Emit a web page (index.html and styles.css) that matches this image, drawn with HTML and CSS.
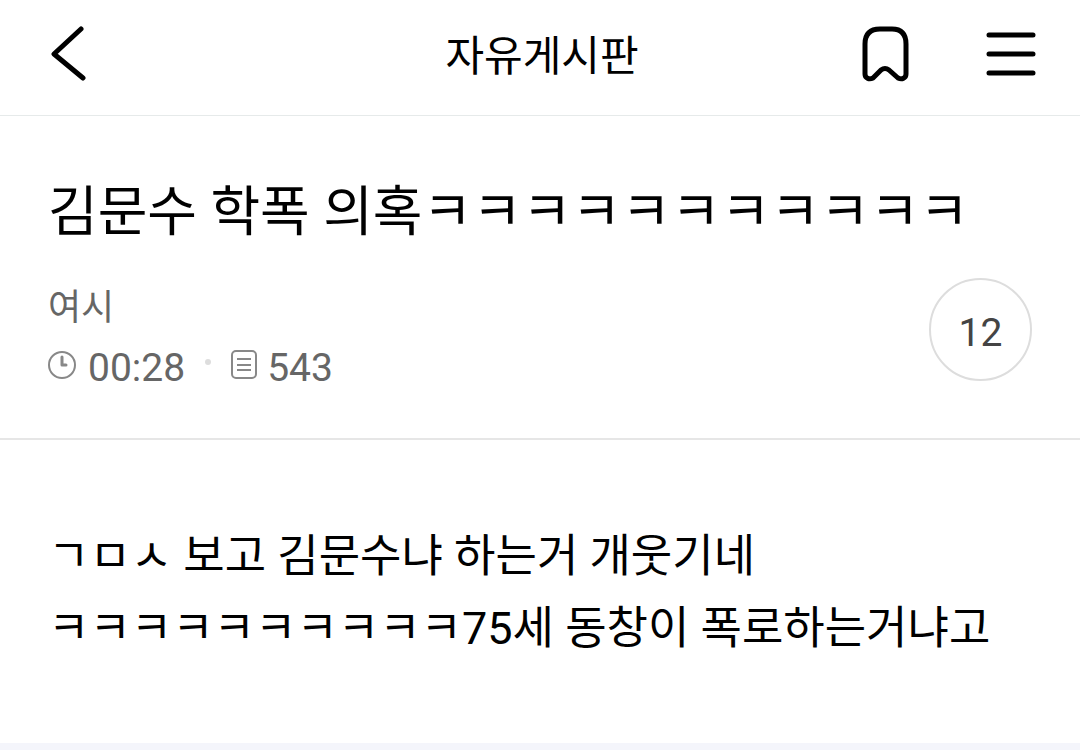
FILE: index.html
```html
<!DOCTYPE html>
<html lang="ko">
<head>
    <meta charset="UTF-8">
    <meta name="viewport" content="width=device-width, initial-scale=1.0">
    <title>자유게시판</title>
    <link rel="stylesheet" href="styles.css">
</head>
<body>
    <header class="top-bar">
        <button class="icon-btn back-btn" type="button" aria-label="뒤로">
            <svg width="40" height="56" viewBox="0 0 40 56" fill="none" stroke="#000" stroke-width="5" stroke-linecap="round" stroke-linejoin="round">
                <path d="M33 3L6 28L35 52"/>
            </svg>
        </button>
        <h1 class="board-name">자유게시판</h1>
        <div class="top-actions">
            <button class="icon-btn" type="button" aria-label="북마크">
                <svg width="48" height="56" viewBox="0 0 48 56" fill="none" stroke="#000" stroke-width="5" stroke-linejoin="round">
                    <path d="M18 3H30Q44 3 44 18V48C44 52 40 54 36 52L27 44Q23 41 19 44L11 52C7 54 3 52 3 48V18Q3 3 18 3Z"/>
                </svg>
            </button>
            <button class="icon-btn" type="button" aria-label="메뉴">
                <svg width="50" height="46" viewBox="0 0 50 46" stroke="#000" stroke-width="5" stroke-linecap="round">
                    <path d="M3 4H47M3 23H47M3 42H47"/>
                </svg>
            </button>
        </div>
    </header>

    <main>
        <section class="post-head">
            <h2 class="post-title">김문수 학폭 의혹ㅋㅋㅋㅋㅋㅋㅋㅋㅋㅋㅋ</h2>
            <div class="post-info">
                <div>
                    <div class="author">여시</div>
                    <div class="meta">
                        <svg class="meta-icon" width="30" height="30" viewBox="0 0 30 30" fill="none" stroke="#888" stroke-width="2">
                            <circle cx="14" cy="15" r="13"/>
                            <path d="M14 7V15H18" stroke-width="3" stroke-linecap="round" stroke-linejoin="round"/>
                        </svg>
                        <span>00:28</span>
                        <span class="dot"></span>
                        <svg class="meta-icon" width="26" height="30" viewBox="0 0 26 30" fill="none" stroke="#888" stroke-width="2">
                            <rect x="1" y="1" width="24" height="27" rx="4"/>
                            <path d="M6 9H20M6 15H20M6 20H20"/>
                        </svg>
                        <span>543</span>
                    </div>
                </div>
                <a class="comment-count" href="#comments">12</a>
            </div>
        </section>
        <article class="post-body">
            <p>ㄱㅁㅅ 보고 김문수냐 하는거 개웃기네</p>
            <p>ㅋㅋㅋㅋㅋㅋㅋㅋㅋㅋ75세 동창이 폭로하는거냐고</p>
        </article>
    </main>
    <footer class="bottom" id="comments"></footer>
</body>
</html>
```
FILE: styles.css
```css
* {
    box-sizing: border-box;
}

body {
    margin: 0;
    background-color: #fff;
    color: #000;
    font-family: Roboto, "Noto Sans CJK KR", sans-serif;
}

h1, h2, p {
    margin: 0;
    font-weight: normal;
}

svg {
    display: block;
}

.top-bar {
    display: grid;
    grid-template-columns: 1fr auto 1fr;
    align-items: center;
    padding: 0 44px 8px 48px;
    height: 116px;
    border-bottom: 1px solid #e6eaea;
}

.icon-btn {
    padding: 0;
    border: none;
    background: none;
    cursor: pointer;
}

.back-btn {
    justify-self: start;
}

.board-name {
    padding-bottom: 2px;
    font-size: 42px;
}

.top-actions {
    display: flex;
    justify-content: flex-end;
    align-items: center;
    gap: 76px;
}

.post-head {
    padding: 57px 48px 40px;
    border-bottom: 2px solid #e6e6e6;
}

.post-title {
    font-size: 54px;
    line-height: 80px;
}

.post-info {
    display: flex;
    justify-content: space-between;
    align-items: flex-start;
    margin-top: 25px;
    color: #666;
}

.author {
    font-size: 36px;
    line-height: 60px;
}

.meta {
    display: flex;
    align-items: center;
    gap: 10px;
    font-size: 39px;
    line-height: 60px;
}

.meta-icon {
    margin-bottom: 6px;
}

.dot {
    width: 6px;
    height: 6px;
    margin: 0 10px 12px;
    border-radius: 50%;
    background-color: #ddd;
}

.comment-count {
    width: 103px;
    height: 103px;
    border: 2px solid #ddd;
    border-radius: 50%;
    color: #444;
    font-size: 39px;
    line-height: 106px;
    text-align: center;
    text-decoration: none;
}

.post-body {
    padding: 81px 48px 78px;
    font-size: 45px;
    line-height: 72px;
}

.bottom {
    height: 7px;
    background-color: #f4f5fb;
}
```
